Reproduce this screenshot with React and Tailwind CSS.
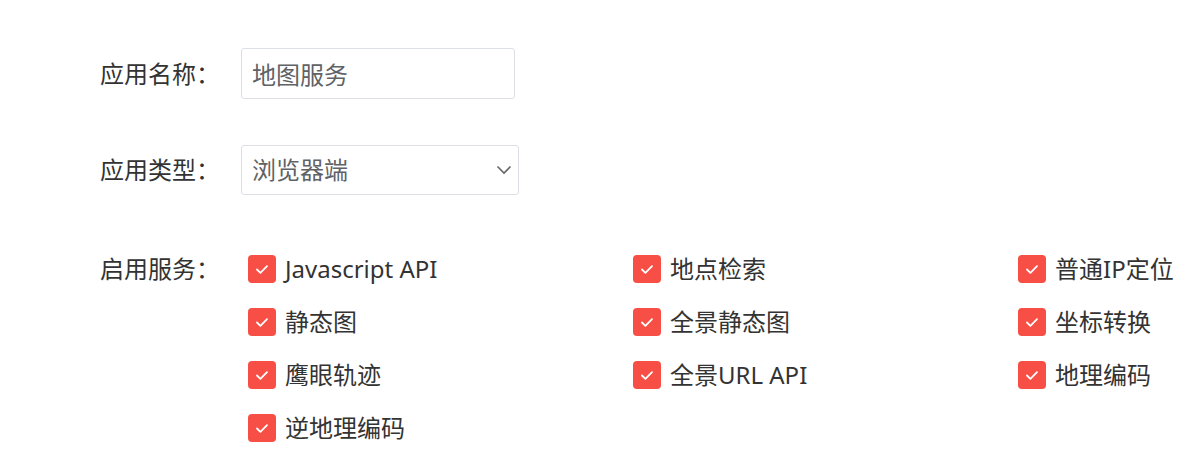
import React, { useState } from 'react';

const services = [
  'Javascript API',
  '地点检索',
  '普通IP定位',
  '静态图',
  '全景静态图',
  '坐标转换',
  '鹰眼轨迹',
  '全景URL API',
  '地理编码',
  '逆地理编码',
];

const font = { fontFamily: "'Noto Sans', 'Noto Sans CJK SC', sans-serif" };

const App = () => {
  const [checked, setChecked] = useState(services.map(() => true));

  const toggle = (idx) => {
    setChecked((prev) => prev.map((v, i) => (i === idx ? !v : v)));
  };

  return (
    <div className="min-h-screen w-full overflow-hidden bg-white pt-[48px] pl-[100px] text-[24px] text-[#333]" style={font}>
      {/* App name */}
      <div className="flex items-center h-[51px]">
        <label className="w-[141px] shrink-0">应用名称：</label>
        <input
          defaultValue="地图服务"
          className="w-[274px] h-[51px] rounded-[3px] border border-[#dcdfe6] px-[10px] text-[24px] text-[#606266] outline-none"
        />
      </div>

      {/* App type */}
      <div className="flex items-center h-[50px] mt-[46px]">
        <label className="w-[141px] shrink-0">应用类型：</label>
        <div className="relative w-[278px] h-[50px]">
          <select
            defaultValue="browser"
            className="w-full h-full appearance-none rounded-[3px] border border-[#dcdfe6] bg-white px-[10px] text-[24px] text-[#606266] outline-none"
          >
            <option value="browser">浏览器端</option>
            <option value="server">服务端</option>
          </select>
          <svg
            className="absolute right-[7px] top-1/2 -translate-y-1/2 pointer-events-none"
            width="16"
            height="10"
            viewBox="0 0 16 10"
            fill="none"
          >
            <path d="M1.5 1.5 L8 8 L14.5 1.5" stroke="#666" strokeWidth="1.6" />
          </svg>
        </div>
      </div>

      {/* Services */}
      <div className="flex items-start mt-[60px]">
        <div className="w-[148px] shrink-0 h-[28px] flex items-center">启用服务：</div>
        <div className="grid grid-cols-[385px_385px_1fr] gap-y-[25px]">
          {services.map((name, idx) => (
            <label key={idx} className="flex items-center h-[28px] cursor-pointer select-none whitespace-nowrap">
              <span
                onClick={() => toggle(idx)}
                className={`w-[28px] h-[28px] rounded-[4px] flex items-center justify-center shrink-0 ${
                  checked[idx] ? 'bg-[#f74f45]' : 'border border-[#dcdfe6] bg-white'
                }`}
              >
                {checked[idx] && (
                  <svg width="14" height="11" viewBox="0 0 14 11" fill="none">
                    <path d="M2 5.5 L5.4 8.8 L12 2.2" stroke="white" strokeWidth="1.8" strokeLinecap="round" strokeLinejoin="round" />
                  </svg>
                )}
              </span>
              <span className="ml-[9px] text-[24px] leading-none">{name}</span>
            </label>
          ))}
        </div>
      </div>
    </div>
  );
};

export default App;
